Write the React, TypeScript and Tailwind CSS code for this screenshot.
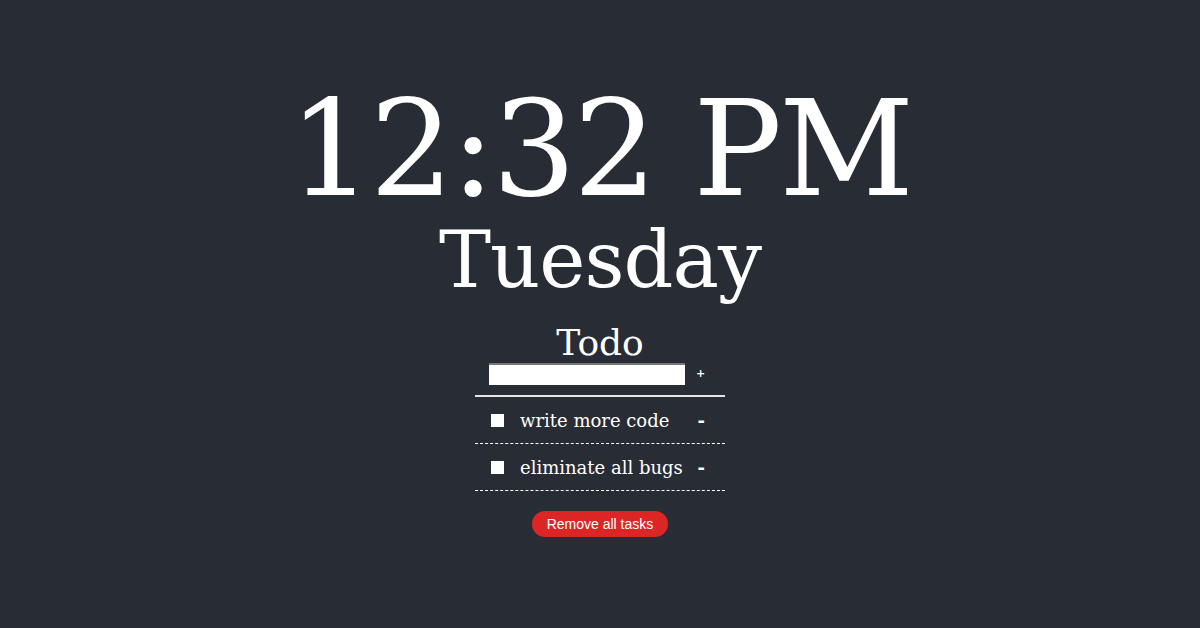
import React, { useState } from 'react';

const tasks = ['write more code', 'eliminate all bugs'];

function TodoItem({ text }: { text: string }) {
  return (
    <li className="flex h-[47px] items-center border-b border-dashed border-white pl-4 pr-5">
      <input type="checkbox" className="h-[13px] w-[13px] appearance-none bg-white" />
      <span className="ml-4 flex-1 text-[18px] text-white">{text}</span>
      <button className="text-[18px] font-bold text-white">-</button>
    </li>
  );
}

export default function App() {
  const [value, setValue] = useState('');

  return (
    <div className="flex h-[628px] w-full flex-col items-center bg-[#282c35] font-['DejaVu_Serif',serif] text-white">
      <h1 className="mt-[89px] text-[132px] leading-[120px] tracking-[-3px]">12:32 PM</h1>
      <h2 className="mt-[11px] text-[78px] leading-[80px] tracking-[-1px]">Tuesday</h2>

      <h3 className="mt-[23px] text-[36px] leading-[40px]">Todo</h3>
      <div className="flex items-center">
        <input
          value={value}
          onChange={e => setValue(e.target.value)}
          className="h-[22px] w-[196px] border-t-2 border-[#777] bg-white outline-none"
        />
        <button className="ml-[11px] mr-[6px] text-[11px] font-bold">+</button>
      </div>

      <ul className="mt-[10px] w-[250px] border-t-2 border-[#e5e5e5]">
        {tasks.map(t => (
          <TodoItem key={t} text={t} />
        ))}
      </ul>

      <button className="mt-[20px] h-[26px] rounded-full bg-[#dc2626] px-[15px] font-['Liberation_Sans',sans-serif] text-[14px] text-white">
        Remove all tasks
      </button>
    </div>
  );
}
